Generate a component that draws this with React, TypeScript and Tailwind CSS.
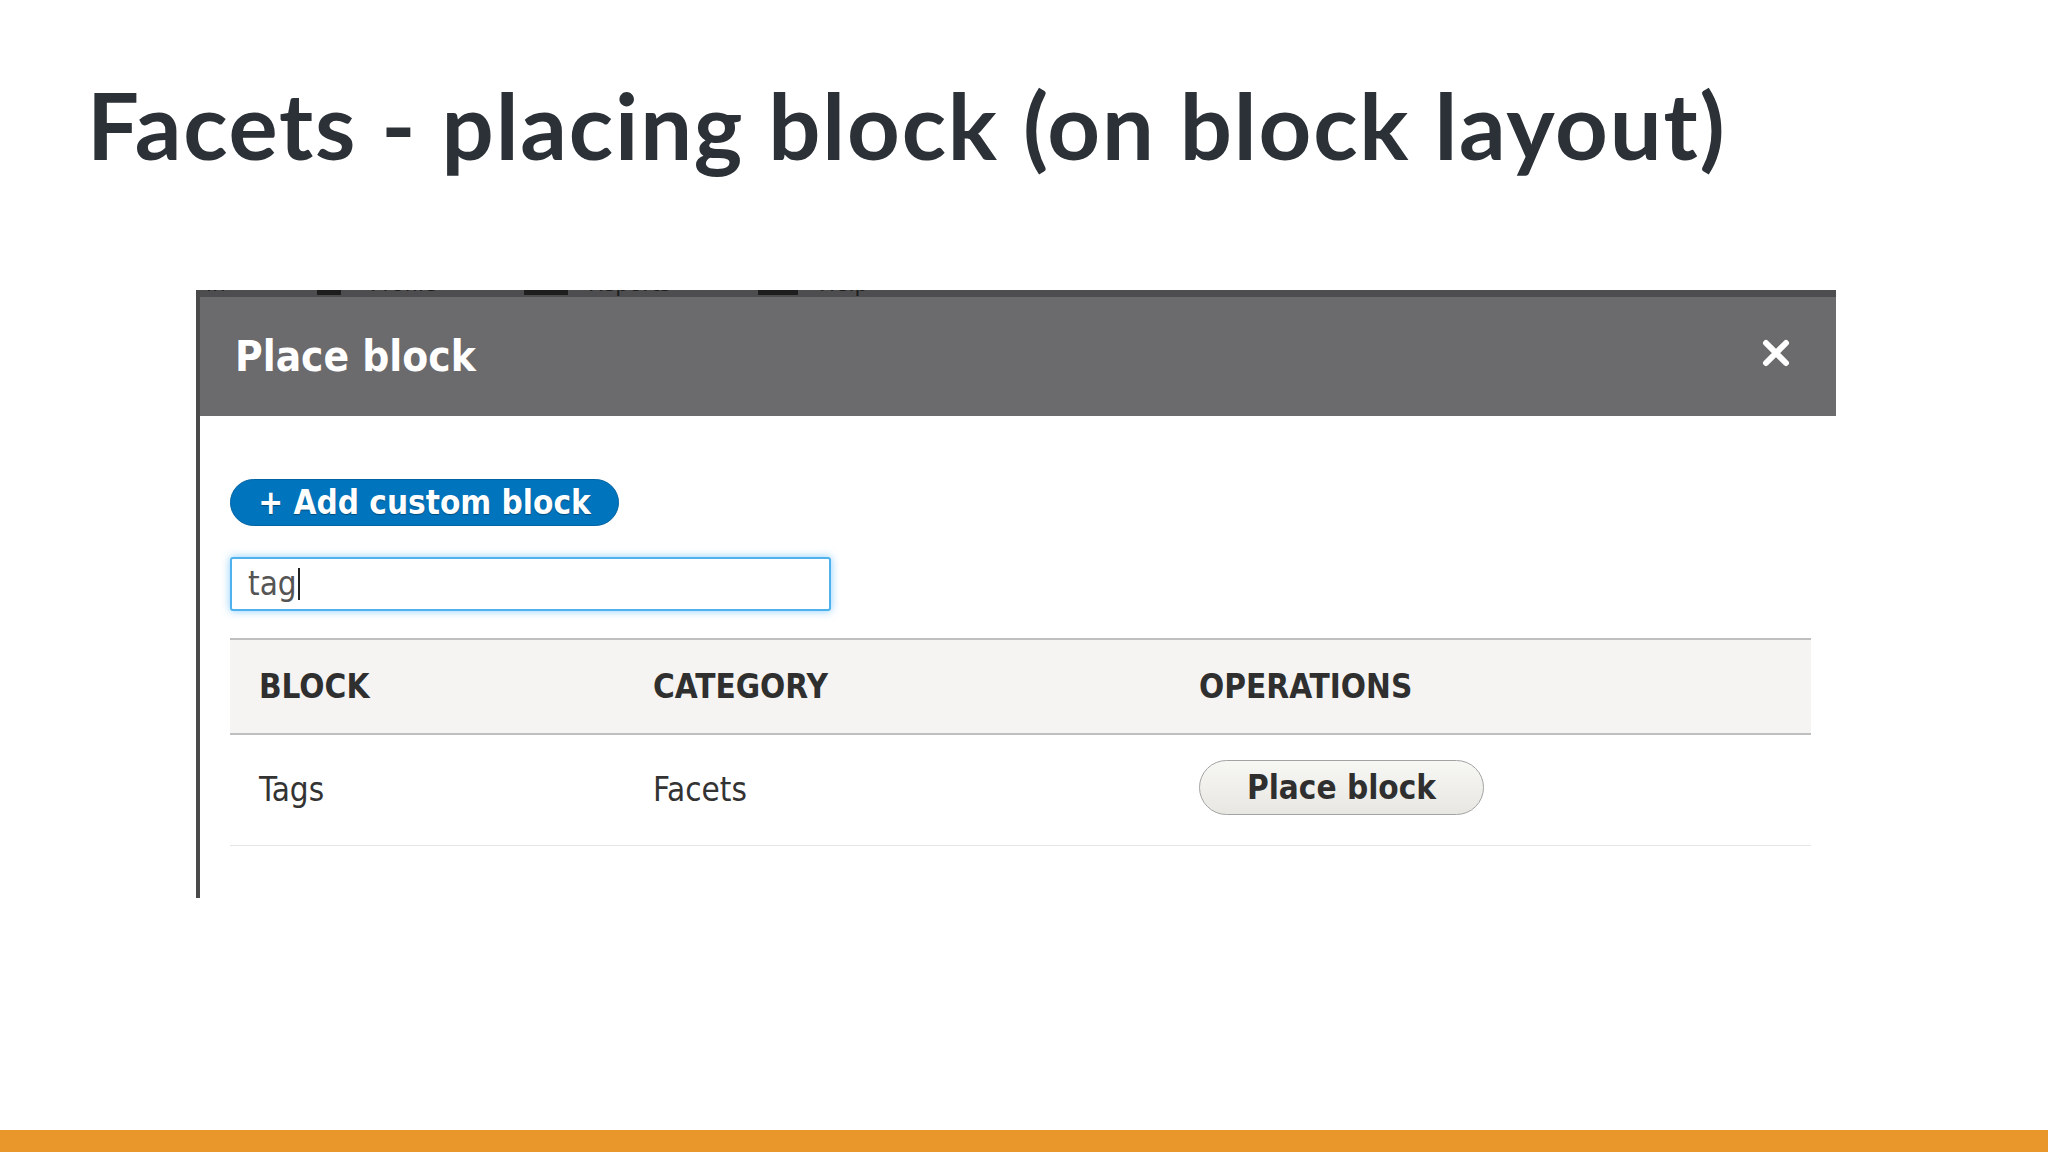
import React from 'react';

const rows = [{ block: 'Tags', category: 'Facets' }];

function CloseIcon() {
  return (
    <svg width="30" height="30" viewBox="0 0 30 30" aria-hidden="true" className="mb-[7px]">
      <path d="M5 5 L25 25 M25 5 L5 25" stroke="#ffffff" strokeWidth="6" strokeLinecap="round" />
    </svg>
  );
}

function Toolbar() {
  // the admin toolbar behind the dialog, almost fully hidden
  return (
    <div className="h-[7px] overflow-hidden bg-[#4d4d4f]">
      <div className="-mt-[19px] flex items-end text-[24px] leading-[24px] text-[#1e1e1e]">
        <span className="ml-[6px] w-[111px]">in</span>
        <span className="h-[22px] w-[24px] bg-[#1e1e1e]" />
        <span className="ml-[29px] w-[154px]">Profile</span>
        <span className="h-[22px] w-[44px] bg-[#1e1e1e]" />
        <span className="ml-[20px] w-[170px]">Reports</span>
        <span className="h-[22px] w-[40px] bg-[#1e1e1e]" />
        <span className="ml-[21px]">Help</span>
      </div>
    </div>
  );
}

export default function App() {
  return (
    <div className="flex h-[1152px] w-[2048px] flex-col overflow-hidden bg-white">
      <h1 className="pl-[87px] pt-[80px] font-['Lato',sans-serif] text-[92px] font-bold leading-[90px] tracking-[1.8px] text-[#2b3137]">
        Facets - placing block (on block layout)
      </h1>

      <div className="ml-[196px] mt-[120px] w-[1640px] border-l-4 border-[#4a4a4a] font-['DejaVu_Sans_Condensed','DejaVu_Sans',sans-serif] [font-stretch:condensed]">
        <Toolbar />
        <div className="flex h-[119px] items-center justify-between bg-[#6b6a6c] pl-[35px] pr-[45px]">
          <span className="text-[42px] font-bold text-white">Place block</span>
          <CloseIcon />
        </div>

        <div className="pb-[52px] pl-[30px] pr-[25px] pt-[63px]">
          <button className="flex h-[47px] w-[389px] items-center justify-center rounded-full border border-[#0063a3] bg-[#0074bd] text-[33px] font-bold text-white [text-shadow:0_1px_1px_rgba(0,0,0,0.35)]">
            + Add custom block
          </button>

          <div className="mt-[31px] flex h-[54px] w-[601px] items-center rounded-[3px] border-2 border-[#4fb2ec] bg-white pl-[16px] shadow-[0_0_9px_rgba(60,170,255,0.6)]">
            <span className="text-[33px] text-[#555555]">tag</span>
            <span className="ml-[1px] h-[32px] w-[2px] bg-[#222222]" />
          </div>

          <div className="mt-[27px]">
            <div className="flex h-[97px] items-center border-y-2 border-[#bfbfbf] bg-[#f5f4f2] pl-[29px] text-[33px] font-bold uppercase text-[#2f2f2f]">
              <div className="w-[394px]">Block</div>
              <div className="w-[546px]">Category</div>
              <div className="flex-1">Operations</div>
            </div>
            {rows.map((row) => (
              <div
                key={row.block}
                className="flex h-[111px] items-center border-b border-[#e6e6e6] pl-[29px] text-[33px] text-[#333333]"
              >
                <div className="w-[394px]">{row.block}</div>
                <div className="w-[546px]">{row.category}</div>
                <div className="flex-1">
                  <button className="-mt-[5px] flex h-[55px] w-[285px] items-center justify-center rounded-full border border-[#a3a3a3] bg-gradient-to-b from-[#f7f7f4] to-[#e8e7e2] text-[33px] font-bold text-[#2f2f2f]">
                    Place block
                  </button>
                </div>
              </div>
            ))}
          </div>
        </div>
      </div>

      <div className="flex-1" />
      <div className="h-[22px] bg-[#e9962a]" />
    </div>
  );
}
